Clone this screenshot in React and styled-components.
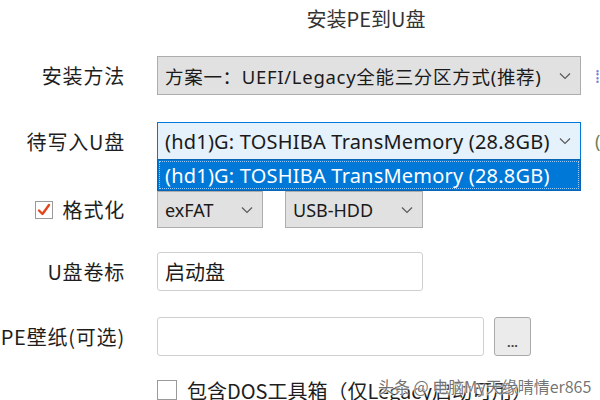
import React from "react";
import styled, { createGlobalStyle } from "styled-components";

const Global = createGlobalStyle`
  html, body { margin: 0; padding: 0; background: #fff; }
  body { width: 600px; height: 400px; overflow: hidden; }
  * { box-sizing: border-box; }
`;

const Page = styled.div`
  position: relative;
  width: 600px;
  height: 400px;
  overflow: hidden;
  background: #fff;
  font-family: "Noto Sans", "Noto Sans CJK SC", sans-serif;
  color: #1b1b1b;
`;

const Title = styled.div`
  height: 36px;
  padding-left: 132px;
  display: flex;
  justify-content: center;
  align-items: center;
  font-size: 20px;
  color: #333;
  font-family: "Noto Sans CJK SC", sans-serif;
`;

const Form = styled.div`
  display: flex;
  flex-direction: column;
`;

const Row = styled.div`
  display: flex;
  align-items: center;
  gap: 32px;
  height: ${(p) => p.$h}px;
  margin-top: ${(p) => p.$mt}px;
  white-space: nowrap;
`;

const Label = styled.div`
  width: 125px;
  flex: none;
  display: flex;
  justify-content: flex-end;
  align-items: center;
  gap: 10px;
  font-size: 20px;
  font-family: "Noto Sans CJK SC", sans-serif;
  color: #1e1e1e;
  letter-spacing: 0.8px;
`;

const Controls = styled.div`
  display: flex;
  align-items: center;
  gap: ${(p) => p.$gap || 12}px;
  height: 100%;
`;

const Select = styled.div`
  position: relative;
  width: ${(p) => p.$w}px;
  height: 100%;
  flex: none;
  display: flex;
  align-items: center;
  justify-content: space-between;
  padding: 0 9px 0 7px;
  background: ${(p) => (p.$focus ? "#e5f1fb" : "#e1e1e1")};
  border: 1px solid ${(p) => (p.$focus ? "#0078d7" : "#adadad")};
  font-size: ${(p) => p.$fs || 18}px;
  font-family: "Noto Sans", "Noto Sans CJK SC", sans-serif;
  color: #1a1a1a;
`;

const SelectText = styled.span`
  letter-spacing: ${(p) => p.$ls || 0}px;
`;

const List = styled.div`
  position: absolute;
  left: -1px;
  right: -1px;
  top: 100%;
  height: 32px;
  background: #0078d7;
  border: 1px solid #0a64b4;
  padding: 1px;
  z-index: 2;
`;

const ListItem = styled.div`
  height: 100%;
  display: flex;
  align-items: center;
  padding-left: 5px;
  color: #fff;
  border: 1px dotted #9fc8ee;
  font-size: 20px;
  letter-spacing: 0.2px;
  font-family: "Noto Sans", "Noto Sans CJK SC", sans-serif;
`;

const Input = styled.div`
  width: ${(p) => p.$w}px;
  height: 100%;
  flex: none;
  display: flex;
  align-items: center;
  padding-left: 7px;
  background: #fff;
  border: 1px solid #cfcfcf;
  border-radius: 3px;
  font-size: 20px;
  font-family: "Noto Sans CJK SC", sans-serif;
  color: #1a1a1a;
`;

const DotsButton = styled.div`
  width: 37px;
  height: 100%;
  flex: none;
  display: flex;
  align-items: flex-end;
  justify-content: center;
  padding-bottom: 8px;
  background: #ebebeb;
  border: 1px solid #a9a9a9;
  border-radius: 3px;
  font-size: 13px;
  font-weight: bold;
  line-height: 8px;
  color: #444;
  font-family: "Liberation Sans", sans-serif;
`;

const Box = styled.div`
  width: ${(p) => p.$s}px;
  height: ${(p) => p.$s}px;
  flex: none;
  border: 1px solid #9a9a9a;
  background: #fff;
  display: flex;
  align-items: center;
  justify-content: center;
`;

const Check = styled.div`
  display: flex;
  align-items: center;
  gap: 10px;
  font-size: 20px;
  font-family: "Noto Sans CJK SC", sans-serif;
  color: #1e1e1e;
`;

const EdgeGlyph = styled.span`
  font-size: 18px;
  color: ${(p) => p.$c};
  font-family: "Noto Sans", sans-serif;
`;

const Watermark = styled.div`
  position: absolute;
  left: 378px;
  top: 374px;
  font-size: 16px;
  font-family: "Noto Sans CJK SC", sans-serif;
  color: rgba(90, 90, 90, 0.85);
  text-shadow: 0 0 2px #fff, 0 0 2px #fff, 0 0 1px #fff;
  white-space: nowrap;
  z-index: 3;
`;

const Chevron = () => (
  <svg width="12" height="8" viewBox="0 0 12 8">
    <path d="M1 1.5 L6 6.5 L11 1.5" fill="none" stroke="#5a5a5a" strokeWidth="1.2" />
  </svg>
);

const Tick = () => (
  <svg width="14" height="14" viewBox="0 0 14 14">
    <path d="M2 7.5 L5.5 11 L12 2" fill="none" stroke="#e2461c" strokeWidth="2.4" strokeLinecap="round" strokeLinejoin="round" />
  </svg>
);

export default function App() {
  return (
    <>
      <Global />
      <Page>
        <Title>安装PE到U盘</Title>
        <Form>
          <Row $h={39} $mt={20}>
            <Label>安装方法</Label>
            <Controls $gap={14}>
              <Select $w={424} $fs={18.5}>
                <SelectText $ls={0.7}>方案一：UEFI/Legacy全能三分区方式(推荐)</SelectText>
                <Chevron />
              </Select>
              <EdgeGlyph $c="#6f86d6">⁞</EdgeGlyph>
            </Controls>
          </Row>
          <Row $h={38} $mt={27}>
            <Label>待写入U盘</Label>
            <Controls $gap={14}>
              <Select $w={424} $focus $fs={20}>
                <SelectText $ls={0.2}>(hd1)G: TOSHIBA TransMemory (28.8GB)</SelectText>
                <Chevron />
                <List>
                  <ListItem>(hd1)G: TOSHIBA TransMemory (28.8GB)</ListItem>
                </List>
              </Select>
              <EdgeGlyph $c="#6f7d55">(</EdgeGlyph>
            </Controls>
          </Row>
          <Row $h={37} $mt={31}>
            <Label>
              <Box $s={18}>
                <Tick />
              </Box>
              格式化
            </Label>
            <Controls $gap={22}>
              <Select $w={106}>
                <SelectText>exFAT</SelectText>
                <Chevron />
              </Select>
              <Select $w={138}>
                <SelectText>USB-HDD</SelectText>
                <Chevron />
              </Select>
            </Controls>
          </Row>
          <Row $h={39} $mt={24}>
            <Label>U盘卷标</Label>
            <Controls>
              <Input $w={266}>启动盘</Input>
            </Controls>
          </Row>
          <Row $h={39} $mt={26}>
            <Label>PE壁纸(可选)</Label>
            <Controls $gap={10}>
              <Input $w={327} />
              <DotsButton>...</DotsButton>
            </Controls>
          </Row>
          <Row $h={24} $mt={22}>
            <Label />
            <Check>
              <Box $s={20} />
              包含DOS工具箱（仅Legacy启动可用）
            </Check>
          </Row>
        </Form>
        <Watermark>头条 @ 电脑My天缘晴情er865</Watermark>
      </Page>
    </>
  );
}
